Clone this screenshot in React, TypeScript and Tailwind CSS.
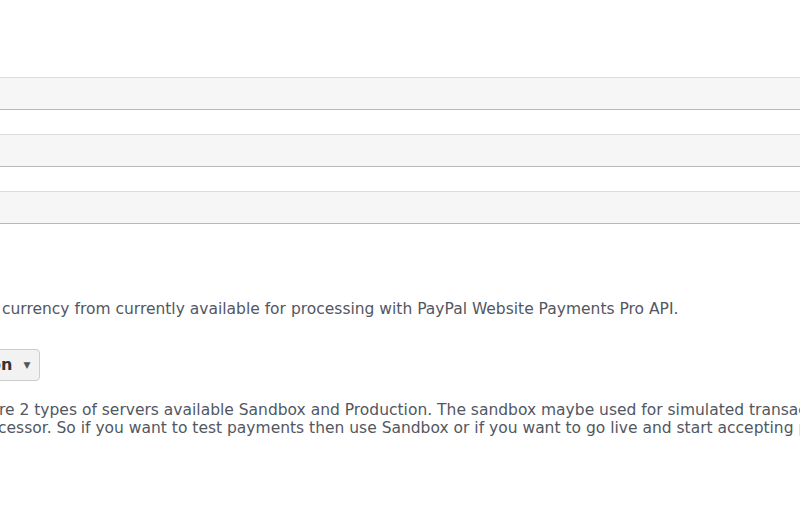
import React from 'react';

const Field: React.FC = () => (
  <div className="h-[33px] w-[calc(100%+40px)] -ml-5 border-t border-b border-t-[#dcdcdc] border-b-[#b8b8b8] bg-[#f6f6f6]" />
);

export default function App() {
  return (
    <div className="h-[510px] w-[800px] overflow-hidden bg-white text-[15.5px] leading-[18px] text-[#525762] [font-family:'DejaVu_Sans',Verdana,sans-serif]">
      <div className="pt-[77px] flex flex-col gap-[24px]">
        <Field />
        <Field />
        <Field />
      </div>

      <p className="mt-[76px] whitespace-nowrap pl-[2px]">
        {' '}currency from currently available for processing with PayPal Website Payments Pro API.
      </p>

      <div className="mt-[31px] -ml-[99px] flex">
        <button className="flex h-[32px] items-center gap-[11px] rounded-[4px] border border-[#ccc] bg-[#f2f2f2] pl-[12px] pr-[9px] font-bold text-[16px] text-[#333]">
          <span>Production</span>
          <span className="text-[9px] text-[#555]">▼</span>
        </button>
      </div>

      <div className="mt-[20px] whitespace-nowrap -ml-[1px]">
        <p>re 2 types of servers available Sandbox and Production. The sandbox maybe used for simulated transactions against the processor.</p>
        <p className="-ml-[1px]">cessor. So if you want to test payments then use Sandbox or if you want to go live and start accepting payments then select Production.</p>
      </div>
    </div>
  );
}
